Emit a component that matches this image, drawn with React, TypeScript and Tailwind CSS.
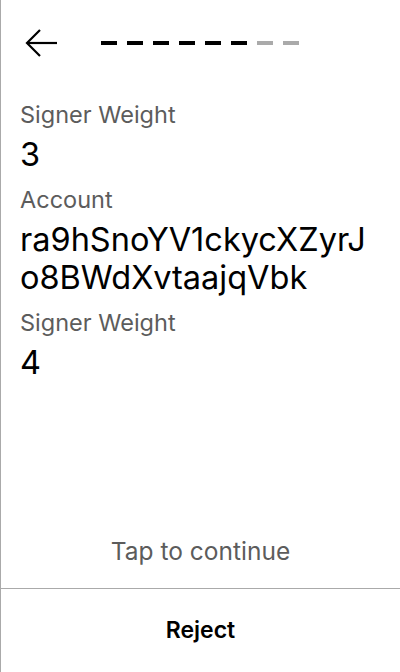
const steps = [true, true, true, true, true, true, false, false];

function Field({ label, value }: { label: string; value: string }) {
  return (
    <div className="flex flex-col">
      <span className="text-[23.5px] leading-[42px] text-[#5c5c5c]">{label}</span>
      <span className="text-[32.5px] leading-[38px] text-black break-all">{value}</span>
    </div>
  );
}

export default function App() {
  return (
    <div className="flex h-[672px] w-[400px] flex-col border-l border-[#aaa] bg-white font-['Inter',sans-serif]">
      <div className="flex h-[86px] shrink-0 items-center pl-[23px]">
        <svg width="34" height="30" viewBox="0 0 34 30" fill="none" stroke="black" strokeWidth="2.2">
          <path d="M33 15H3" />
          <path d="M16 2L3 15l13 13" />
        </svg>
        <div className="ml-[43px] flex gap-[10px]">
          {steps.map((done, i) => (
            <div key={i} className={`h-[4px] w-[16px] ${done ? "bg-black" : "bg-[#aaa]"}`} />
          ))}
        </div>
      </div>

      <div className="flex flex-col gap-[5px] px-[19px] pt-[8px]">
        <Field label="Signer Weight" value="3" />
        <Field label="Account" value="ra9hSnoYV1ckycXZyrJo8BWdXvtaajqVbk" />
        <Field label="Signer Weight" value="4" />
      </div>

      <div className="flex-1" />

      <div className="pb-[22px] text-center text-[24.5px] leading-[30px] text-[#5c5c5c]">Tap to continue</div>
      <button className="flex h-[84px] shrink-0 justify-center border-t border-[#aaa] pt-[27px] text-[23px] leading-[28px] font-semibold text-black">
        Reject
      </button>
    </div>
  );
}
